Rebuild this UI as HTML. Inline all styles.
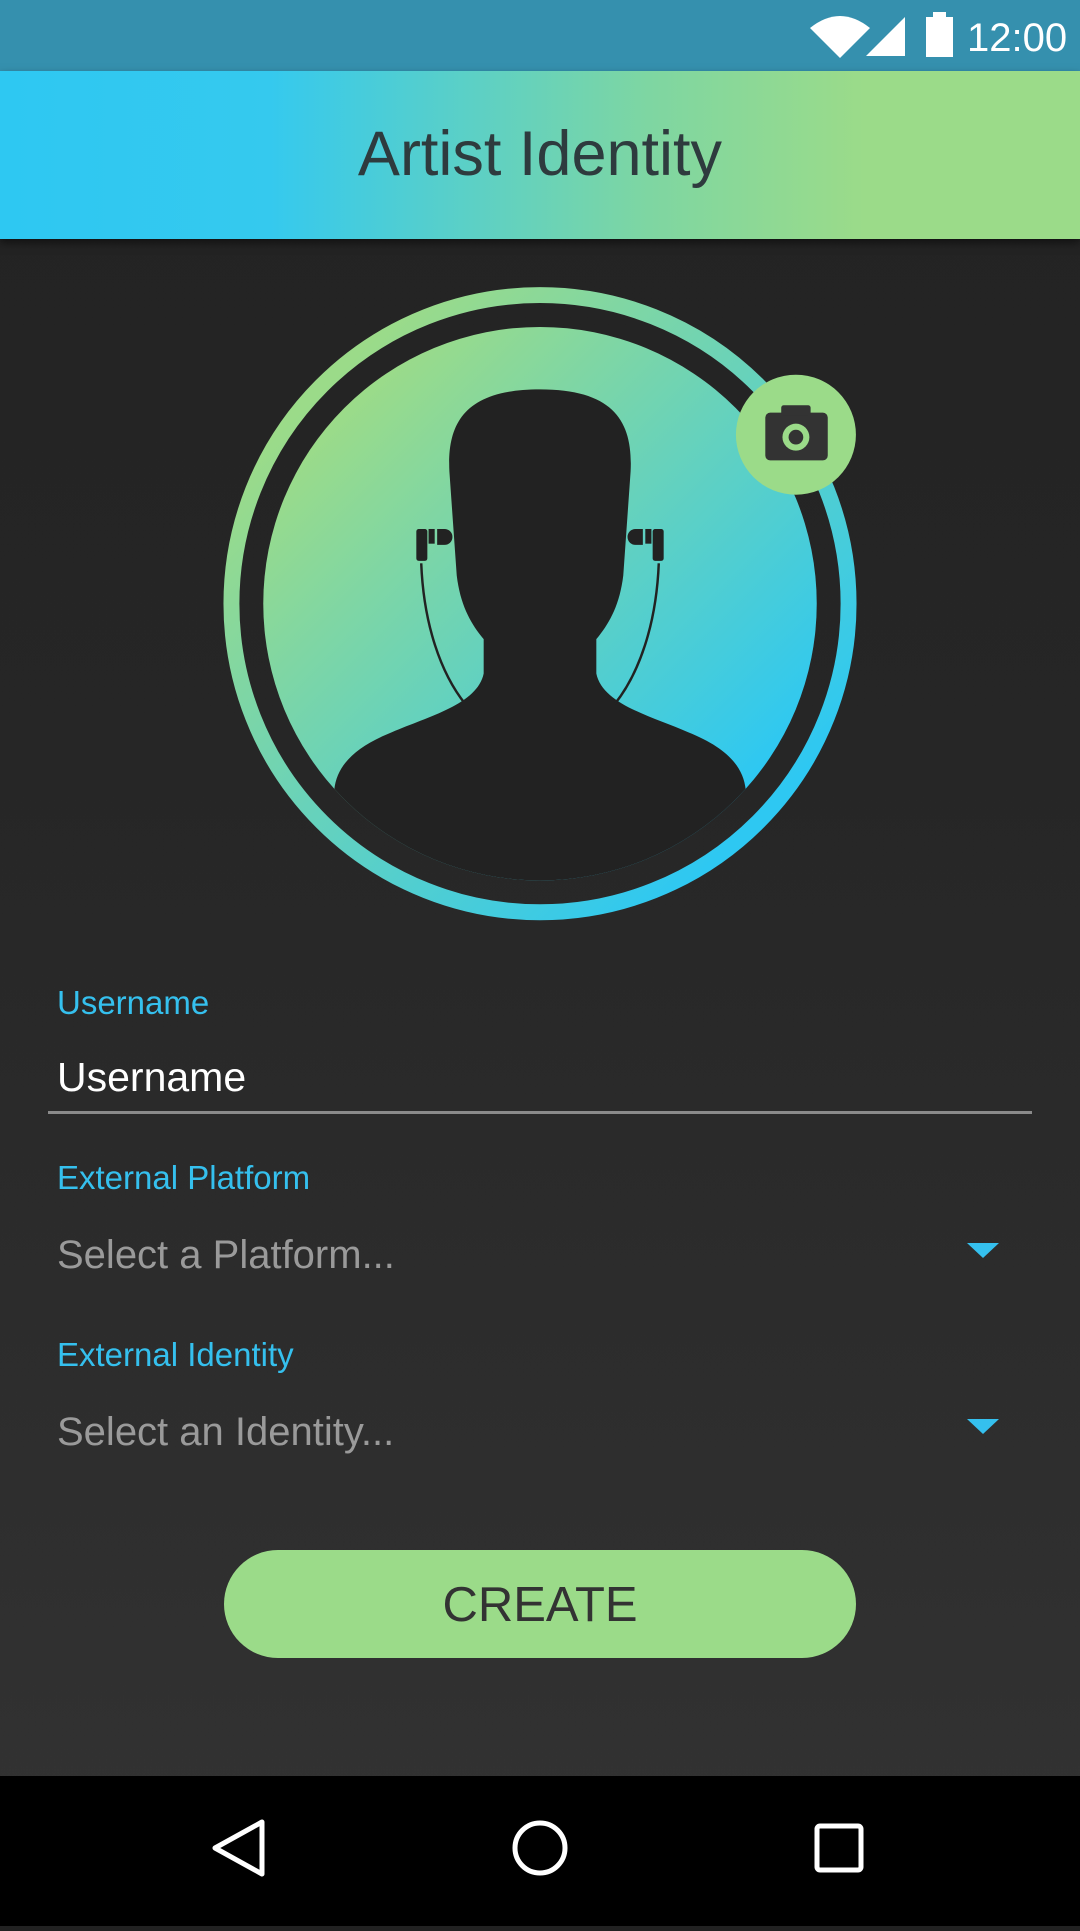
<!DOCTYPE html>
<html><head><meta charset="utf-8"><style>
html,body{margin:0;padding:0}
body{width:1080px;height:1920px;position:relative;overflow:hidden;font-family:"Liberation Sans",sans-serif;background:linear-gradient(#222 0%,#262626 40%,#333 100%)}
.status{position:absolute;left:0;top:0;width:1080px;height:71px;background:#3590ae}
.header{position:absolute;left:0;top:71px;width:1080px;height:168px;background:linear-gradient(90deg,#2ec8f2 0%,#35c9ee 25%,#7ed6a2 60%,#9bdb89 80%);box-shadow:0 4px 8px rgba(0,0,0,.5)}
.header div{position:absolute;width:100%;top:47px;text-align:center;font-size:63px;color:#2e3b3e}
.lbl{position:absolute;left:57px;font-size:33px;color:#35c0ee}
.val{position:absolute;left:57px;font-size:40px;color:#9a9a9a}
.tri{position:absolute;left:967px;width:0;height:0;border-left:16px solid transparent;border-right:16px solid transparent;border-top:15px solid #35c0ee}
.btn{position:absolute;left:224px;top:1550px;width:632px;height:108px;border-radius:54px;background:#9bdb89;text-align:center;line-height:110px;font-size:49px;color:#333}
.nav{position:absolute;left:0;top:1776px;width:1080px;height:150px;background:#000}
</style></head><body>
<div class="status">
<svg width="1080" height="71" style="position:absolute;left:0;top:0">
<path d="M810 28 Q840 4 870 28 L840 58 Z" fill="#fff"/>
<path d="M866 56 L905 17 L905 56 Z" fill="#fff"/>
<rect x="926" y="17" width="27" height="40" fill="#fff"/><rect x="933" y="12" width="13" height="6" fill="#fff"/>
<text x="967" y="51" font-size="40" fill="#fff" font-family="Liberation Sans">12:00</text>
</svg></div>
<div class="header"><div>Artist Identity</div></div>
<svg width="1080" height="1920" viewBox="0 0 882 1568" style="position:absolute;left:0;top:0">
<defs>
<linearGradient id="g" x1="0" y1="0" x2="1" y2="1"><stop offset="0.15" stop-color="#9bdb89"/><stop offset="0.85" stop-color="#2ec8f2"/></linearGradient>
<clipPath id="c"><circle cx="441" cy="493" r="226"/></clipPath>
</defs>
<circle cx="441" cy="493" r="252" fill="none" stroke="url(#g)" stroke-width="13"/>
<circle cx="441" cy="493" r="226" fill="url(#g)"/>
<g clip-path="url(#c)" fill="#222">
<path d="M441,318 C380,318 365,345 367,385 L373,470 C376,495 385,510 395,522 L395,550 C390,575 350,585 320,598 C290,610 275,625 273,645 L270,760 L612,760 L609,645 C607,625 592,610 562,598 C532,585 492,575 487,550 L487,522 C497,510 506,495 509,470 L515,385 C517,345 502,318 441,318 Z"/>
<rect x="340" y="432" width="9" height="26" rx="2"/><rect x="350" y="432" width="5" height="12"/><path d="M357,432 h6 a6,6 0 0 1 0,13 h-6z"/>
<rect x="533" y="432" width="9" height="26" rx="2"/><rect x="527" y="432" width="5" height="12"/><path d="M525,432 h-6 a6,6 0 0 0 0,13 h6z"/>
</g>
<path d="M344,460 C346,510 360,550 380,575" fill="none" stroke="#222" stroke-width="2"/>
<path d="M538,460 C536,510 522,550 502,575" fill="none" stroke="#222" stroke-width="2"/>
<circle cx="650" cy="355" r="49" fill="#9bdb89"/>
<rect x="625" y="337" width="51" height="39" rx="4" fill="#333"/><rect x="638" y="331" width="24" height="8" rx="2" fill="#333"/>
<circle cx="650" cy="357" r="11" fill="#9bdb89"/><circle cx="650" cy="357" r="6" fill="#333"/>
</svg>
<div class="lbl" style="top:984px">Username</div>
<div class="val" style="top:1054px;color:#fff;font-size:41px">Username</div>
<div style="position:absolute;left:48px;top:1111px;width:984px;height:3px;background:#8a8a8a"></div>
<div class="lbl" style="top:1159px">External Platform</div>
<div class="val" style="top:1233px">Select a Platform...</div>
<div class="tri" style="top:1243px"></div>
<div class="lbl" style="top:1336px">External Identity</div>
<div class="val" style="top:1410px">Select an Identity...</div>
<div class="tri" style="top:1419px"></div>
<div class="btn">CREATE</div>
<div class="nav"><svg width="1080" height="150">
<path d="M262 46 L215 72 L262 98 Z" fill="none" stroke="#fff" stroke-width="5" stroke-linejoin="round"/>
<circle cx="540" cy="72" r="25" fill="none" stroke="#fff" stroke-width="5"/>
<rect x="817" y="50" width="44" height="44" rx="3" fill="none" stroke="#fff" stroke-width="5"/>
</svg></div>
</body></html>
